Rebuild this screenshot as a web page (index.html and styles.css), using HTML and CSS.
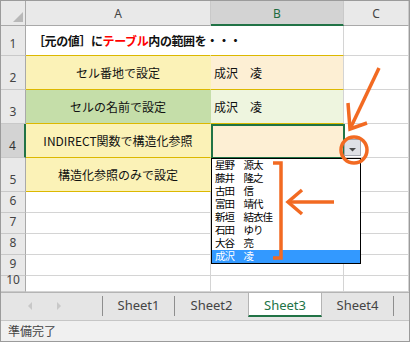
FILE: index.html
```html
<!DOCTYPE html>
<html lang="ja">
<head>
    <meta charset="UTF-8">
    <title>Sheet3 - 入力規則</title>
    <link rel="stylesheet" href="styles.css">
</head>
<body>
    <div class="window">
        <div class="sheet">
            <!-- 見出し行 -->
            <div class="cell hd corner">
                <svg width="24" height="24" viewBox="0 0 24 24"><polygon points="22,11 22,21 12,21" fill="#b8b8b8"/></svg>
            </div>
            <div class="cell hd col-hd">A</div>
            <div class="cell hd col-hd active-col">B</div>
            <div class="cell hd col-hd">C</div>

            <div class="cell hd row-hd">1</div>
            <div class="cell title gold-b"><span>［元の値］に<em>テーブル</em>内の範囲を・・・</span></div>
            <div class="cell gold-b"></div>
            <div class="cell"></div>

            <div class="cell hd row-hd">2</div>
            <div class="cell label yellow gold-b">セル番地で設定</div>
            <div class="cell value orange gold-b">成沢　凌</div>
            <div class="cell"></div>

            <div class="cell hd row-hd">3</div>
            <div class="cell label green gold-b">セルの名前で設定</div>
            <div class="cell value pale-green gold-b">成沢　凌</div>
            <div class="cell"></div>

            <div class="cell hd row-hd active-row">4</div>
            <div class="cell label yellow gold-b">INDIRECT関数で構造化参照</div>
            <div class="cell value orange gold-b"></div>
            <div class="cell"></div>

            <div class="cell hd row-hd">5</div>
            <div class="cell label yellow gold-b">構造化参照のみで設定</div>
            <div class="cell value orange gold-b"></div>
            <div class="cell"></div>

            <div class="cell hd row-hd">6</div>
            <div class="cell"></div>
            <div class="cell"></div>
            <div class="cell"></div>

            <div class="cell hd row-hd">7</div>
            <div class="cell"></div>
            <div class="cell"></div>
            <div class="cell"></div>

            <div class="cell hd row-hd">8</div>
            <div class="cell"></div>
            <div class="cell"></div>
            <div class="cell"></div>

            <div class="cell hd row-hd">9</div>
            <div class="cell"></div>
            <div class="cell"></div>
            <div class="cell"></div>

            <div class="cell hd row-hd">10</div>
            <div class="cell"></div>
            <div class="cell"></div>
            <div class="cell"></div>
        </div>

        <div class="tabbar">
            <div class="tab-nav">
                <svg width="101" height="24" viewBox="0 0 101 24"><polygon points="31,9 31,17 27,13" fill="#c8c8c8"/><polygon points="56,9 56,17 60,13" fill="#c8c8c8"/></svg>
            </div>
            <div class="tab-sep"></div>
            <div class="tab">Sheet1</div>
            <div class="tab-sep"></div>
            <div class="tab tab-wide">Sheet2</div>
            <div class="tab active">Sheet3</div>
            <div class="tab">Sheet4</div>
            <div class="tab-sep"></div>
        </div>

        <div class="status">準備完了</div>

        <!-- 選択セル・リスト・注釈 -->
        <div class="selection"></div>
        <div class="dd-button">
            <svg width="15" height="15" viewBox="0 0 15 15"><polygon points="4,6 11,6 7.5,9.5" fill="#4a4a4a"/></svg>
        </div>
        <ul class="dropdown">
            <li>星野　源太</li>
            <li>藤井　隆之</li>
            <li>古田　信</li>
            <li>富田　靖代</li>
            <li>新垣　結衣佳</li>
            <li>石田　ゆり</li>
            <li>大谷　亮</li>
            <li class="picked">成沢　凌</li>
        </ul>
        <svg class="notes" width="410" height="342" viewBox="0 0 410 342">
            <g fill="none" stroke="#f26a22" stroke-width="3.5" stroke-linecap="butt">
                <circle cx="354" cy="150" r="13"/>
                <path d="M379 68 L350 129"/>
                <path d="M348 103 L350 129 L367 123"/>
                <path d="M273 163 H281 V258 H273"/>
                <path d="M334 202 H288"/>
                <path d="M302 190 L288 202 L302 214"/>
            </g>
        </svg>
    </div>
</body>
</html>
```

FILE: styles.css
```css
* {
    margin: 0;
    padding: 0;
    box-sizing: border-box;
}

body {
    background-color: #fff;
    font-family: "Noto Sans", "Noto Sans CJK JP", sans-serif;
}

.window {
    position: relative;
    width: 410px;
    height: 342px;
    border: 1px solid #9b9b9b;
    background-color: #fff;
    display: flex;
    flex-direction: column;
    overflow: hidden;
}

/* シート */
.sheet {
    display: grid;
    grid-template-columns: 25px 185px 133px 65px;
    grid-template-rows: 25px 30px 34px 34px 34px 34px 21px 21px 21px 21px 16px;
    height: 291px;
    flex-shrink: 0;
    overflow: hidden;
}

.cell {
    display: flex;
    align-items: center;
    border-right: 1px solid #d4d4d4;
    border-bottom: 1px solid #d4d4d4;
    font-family: "Noto Sans CJK JP", sans-serif;
    font-size: 12px;
    color: #111;
    white-space: nowrap;
}

.hd {
    justify-content: center;
    background-color: #e9e9e9;
    border-color: #c9c9c9;
    font-family: "Noto Sans", sans-serif;
    font-size: 12px;
    color: #444;
}

.corner {
    align-items: flex-end;
    justify-content: flex-end;
    border-right-color: #a9a9a9;
    border-bottom-color: #a9a9a9;
}

.col-hd {
    border-bottom-color: #a9a9a9;
    padding-top: 1px;
}

.row-hd {
    align-items: flex-end;
    border-right-color: #a9a9a9;
    line-height: 14px;
    padding-bottom: 4px;
}

.active-col {
    background-color: #d3d3d3;
    color: #1e6b40;
    border-bottom: 2px solid #217346;
}

.active-row {
    background-color: #d3d3d3;
    color: #333;
    border-right: 2px solid #217346;
}

.title {
    padding-left: 7px;
    font-weight: bold;
    letter-spacing: -0.4px;
    overflow: visible;
    border-right-color: transparent;
}

.title em {
    font-style: normal;
    color: #ff0000;
}

.label {
    justify-content: center;
    border-right-color: transparent;
}

.value {
    padding-left: 3px;
}

.gold-b {
    border-bottom-color: #dcb800;
}

.yellow {
    background-color: #fbf2b7;
}

.orange {
    background-color: #fdefd4;
}

.green {
    background-color: #c5dea9;
}

.pale-green {
    background-color: #eef5df;
}

/* シート見出し */
.tabbar {
    display: flex;
    align-items: flex-start;
    height: 29px;
    background-color: #e5e5e5;
    border-top: 1px solid #b4b4b4;
    border-bottom: 1px solid #c6c6c6;
    flex-shrink: 0;
}

.tab-nav {
    width: 101px;
    height: 24px;
}

.tab-sep {
    width: 1px;
    height: 20px;
    margin-top: 3px;
    background-color: #8e8e8e;
}

.tab {
    width: 71px;
    height: 24px;
    display: flex;
    align-items: center;
    justify-content: center;
    font-size: 13px;
    color: #444;
}

.tab-wide {
    width: 73px;
}

.tab.active {
    width: 74px;
    background-color: #fff;
    color: #217346;
    border-left: 1px solid #b4b4b4;
    border-right: 1px solid #b4b4b4;
    border-bottom: 2px solid #217346;
    padding-top: 1px;
}

.status {
    flex: 1;
    background-color: #f0f0f0;
    font-family: "Noto Sans CJK JP", sans-serif;
    font-size: 12px;
    color: #444;
    padding-left: 7px;
    line-height: 19px;
}

/* 重なる部品 */
.selection {
    position: absolute;
    left: 210px;
    top: 123px;
    width: 134px;
    height: 35px;
    border: 2px solid #217346;
}

.dd-button {
    position: absolute;
    left: 343px;
    top: 138px;
    width: 17px;
    height: 17px;
    background-color: #dfe1e6;
    border: 1px solid #a3a7b0;
}

.dropdown {
    position: absolute;
    left: 210px;
    top: 157px;
    width: 150px;
    height: 106px;
    list-style: none;
    background-color: #fff;
    border: 1px solid #000;
}

.dropdown li {
    height: 13px;
    line-height: 13px;
    padding-left: 3px;
    font-family: "Liberation Sans", "Noto Sans CJK JP", sans-serif;
    font-size: 10.5px;
    letter-spacing: -1px;
    color: #000;
    overflow: hidden;
}

.dropdown .picked {
    background-color: #3399ff;
    color: #fff;
}

.notes {
    position: absolute;
    left: -1px;
    top: -1px;
}
```
